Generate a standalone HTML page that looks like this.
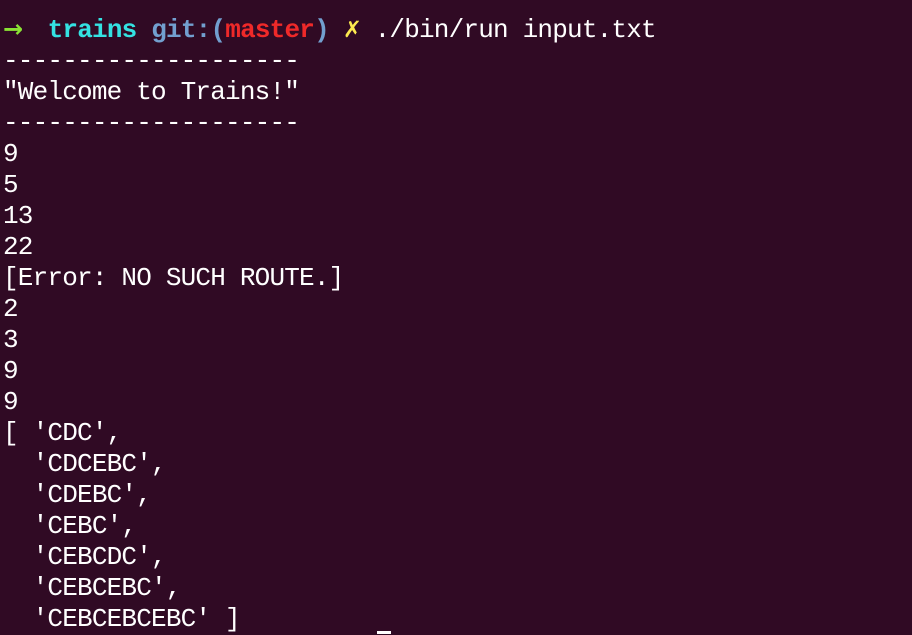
<!DOCTYPE html>
<html><head><meta charset="utf-8"><style>
html,body{margin:0;padding:0;background:#300a24;width:912px;height:634px;overflow:hidden}
pre{margin:0;position:absolute;left:3px;top:14px;font-family:"Liberation Mono","DejaVu Sans Mono",monospace;font-size:26px;letter-spacing:-0.8px;line-height:31px;color:#ffffff}
.g{color:#8ae234;font-weight:bold;font-family:"DejaVu Sans",sans-serif;font-size:24px;display:inline-block;width:15px}.c{color:#34e2e2;font-weight:bold}.b{color:#729fcf;font-weight:bold}.r{color:#ef2929;font-weight:bold}.y{color:#fce94f;font-weight:bold;font-size:28px}
.cur{position:absolute;left:377px;top:631px;width:14px;height:3px;background:#fff}
</style></head><body>
<pre><span class="g">→</span>  <span class="c">trains</span> <span class="b">git:(</span><span class="r">master</span><span class="b">)</span> <span class="y">✗</span> ./bin/run input.txt
--------------------
"Welcome to Trains!"
--------------------
9
5
13
22
[Error: NO SUCH ROUTE.]
2
3
9
9
[ 'CDC',
  'CDCEBC',
  'CDEBC',
  'CEBC',
  'CEBCDC',
  'CEBCEBC',
  'CEBCEBCEBC' ]</pre>
<div class="cur"></div>
</body></html>
